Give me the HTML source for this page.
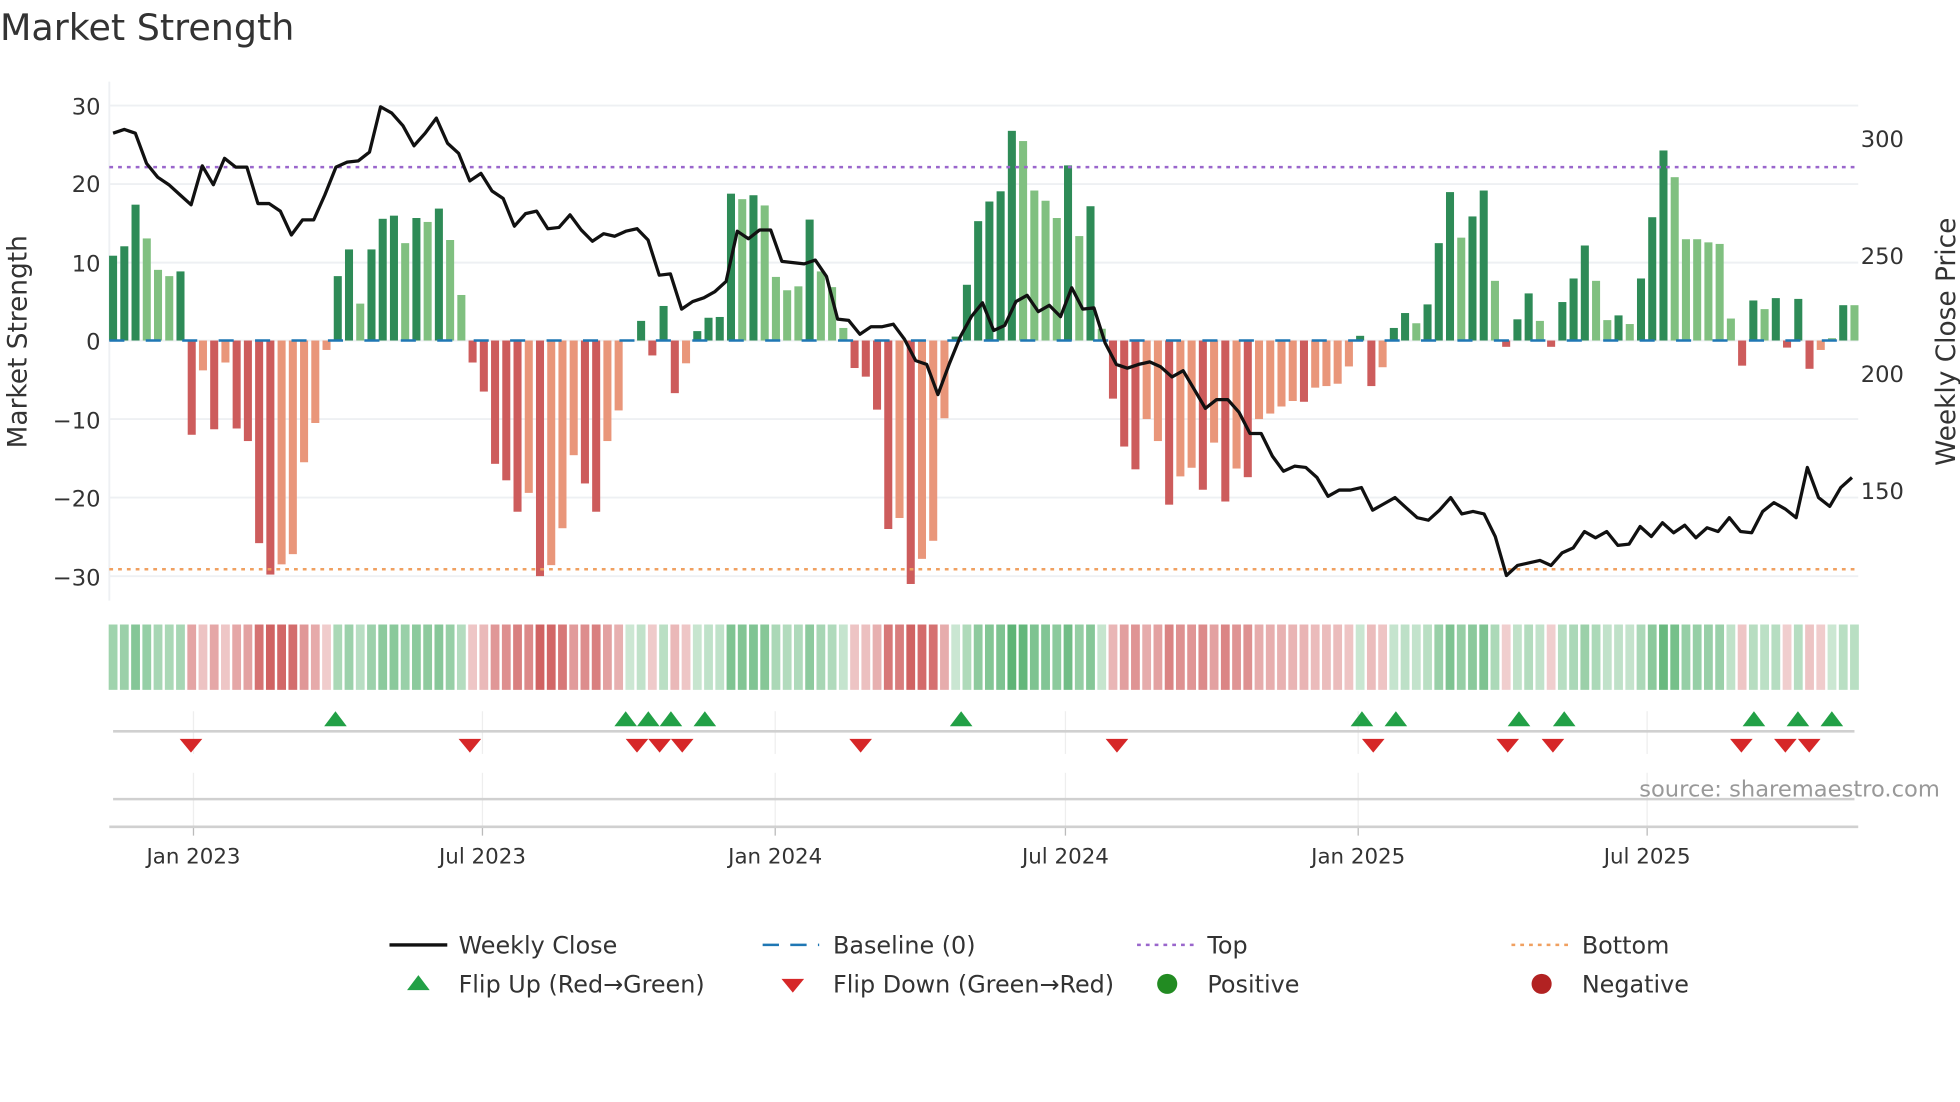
<!DOCTYPE html>
<html><head><meta charset="utf-8"><style>
html,body{margin:0;padding:0;background:#fff;}
svg{display:block;font-family:"DejaVu Sans","Liberation Sans",sans-serif;}
</style></head><body>
<svg id="s" width="1960" height="1102" viewBox="0 0 1560 877" preserveAspectRatio="none" xmlns="http://www.w3.org/2000/svg">
<rect width="1560" height="877" fill="#fff"/>
<text x="0" y="32" font-size="29" fill="#333">Market Strength</text>
<g id="grid"></g>
<g id="bars"></g>
<line x1="87" y1="133" x2="1479" y2="133" stroke="#9a66cc" stroke-width="2" stroke-dasharray="3,4"/>
<line x1="87" y1="453" x2="1479" y2="453" stroke="#f0a060" stroke-width="2" stroke-dasharray="3,4"/>
<line x1="87" y1="271" x2="1479" y2="271" stroke="#1f77b4" stroke-width="2" stroke-dasharray="12,17"/>
<polyline id="price" fill="none" stroke="#111" stroke-width="2.6" stroke-linejoin="round"/>
<g id="heat"></g>
<g id="marks"></g>
<g font-size="18" fill="#333" text-anchor="end">
<text x="80" y="91">30</text><text x="80" y="153">20</text><text x="80" y="216">10</text><text x="80" y="278">0</text>
<text x="80" y="341">−10</text><text x="80" y="403">−20</text><text x="80" y="466">−30</text>
</g>
<g font-size="18" fill="#333">
<text x="1481" y="117">300</text><text x="1481" y="210">250</text><text x="1481" y="304">200</text><text x="1481" y="397">150</text>
</g>
<text transform="translate(21,272) rotate(-90)" font-size="21" fill="#333" text-anchor="middle">Market Strength</text>
<text transform="translate(1556,272) rotate(-90)" font-size="21" fill="#333" text-anchor="middle">Weekly Close Price</text>
<text x="1544" y="634" font-size="18" fill="#999" text-anchor="end">source: sharemaestro.com</text>
<g font-size="17" fill="#333" text-anchor="middle">
<text x="154" y="687">Jan 2023</text><text x="384" y="687">Jul 2023</text><text x="617" y="687">Jan 2024</text>
<text x="848" y="687">Jul 2024</text><text x="1081" y="687">Jan 2025</text><text x="1311" y="687">Jul 2025</text>
</g>
<g font-size="19" fill="#333">
<line x1="310" y1="752" x2="356" y2="752" stroke="#111" stroke-width="2.6"/><text x="365" y="759">Weekly Close</text>
<line x1="607" y1="752" x2="652" y2="752" stroke="#1f77b4" stroke-width="2" stroke-dasharray="13,9"/><text x="663" y="759">Baseline (0)</text>
<line x1="905" y1="752" x2="950" y2="752" stroke="#9a66cc" stroke-width="2" stroke-dasharray="3,4"/><text x="961" y="759">Top</text>
<line x1="1203" y1="752" x2="1248" y2="752" stroke="#f0a060" stroke-width="2" stroke-dasharray="3,4"/><text x="1259" y="759">Bottom</text>
<polygon points="324,788 342,788 333,776" fill="#22a046"/><text x="365" y="790">Flip Up (Red→Green)</text>
<polygon points="622,779 640,779 631,790" fill="#d62728"/><text x="663" y="790">Flip Down (Green→Red)</text>
<circle cx="929" cy="783" r="8" fill="#228b22"/><text x="961" y="790">Positive</text>
<circle cx="1227" cy="783" r="8" fill="#b22222"/><text x="1259" y="790">Negative</text>
</g>
</svg>
<script>
var NS="http://www.w3.org/2000/svg";
function el(t,a,p){var e=document.createElementNS(NS,t);for(var k in a)e.setAttribute(k,a[k]);document.getElementById(p).appendChild(e);return e;}
[84,146.5,209,271,333.5,396,458.5].forEach(function(y){el('line',{x1:87,y1:y,x2:1479,y2:y,stroke:'#eef0f3','stroke-width':1.5},'grid');});
el('line',{x1:87,y1:65,x2:87,y2:478,stroke:'#eef0f3','stroke-width':1.5},'grid');
[154,384,617,848,1081,1311].forEach(function(x){el('line',{x1:x,y1:566,x2:x,y2:600,stroke:'#eee','stroke-width':1},'grid');el('line',{x1:x,y1:615,x2:x,y2:665,stroke:'#eee','stroke-width':1},'grid');el('line',{x1:x,y1:658,x2:x,y2:665,stroke:'#bbb','stroke-width':1},'grid');});
el('line',{x1:90,y1:582,x2:1476,y2:582,stroke:'#d0d0d0','stroke-width':2},'grid');
el('line',{x1:90,y1:636,x2:1476,y2:636,stroke:'#d0d0d0','stroke-width':2},'grid');
el('line',{x1:87,y1:658,x2:1479,y2:658,stroke:'#d0d0d0','stroke-width':2},'grid');
var B=[[10.8,1],[12,1],[17.3,1],[13,0],[9,0],[8.2,0],[8.8,1],[-12,1],[-3.8,0],[-11.3,1],[-2.8,0],[-11.2,1],[-12.8,1],[-25.8,1],[-29.8,1],[-28.5,0],[-27.2,0],[-15.5,0],[-10.5,0],[-1.2,0],
[8.2,1],[11.6,1],[4.7,0],[11.6,1],[15.5,1],[15.9,1],[12.4,0],[15.6,1],[15.1,0],[16.8,1],[12.8,0],[5.8,0],[-2.8,1],[-6.5,1],[-15.7,1],[-17.8,1],[-21.8,1],[-19.4,0],[-30,1],[-28.6,0],
[-23.9,0],[-14.6,0],[-18.2,1],[-21.8,1],[-12.8,0],[-8.9,0],[0,0],[2.5,1],[-1.9,1],[4.4,1],[-6.7,1],[-2.9,0],[1.2,1],[2.9,1],[3.0,1],[18.7,1],[18,0],[18.5,1],[17.2,0],[8.1,0],
[6.4,0],[6.9,0],[15.4,1],[8.8,0],[6.8,0],[1.6,0],[-3.5,1],[-4.6,1],[-8.8,1],[-24,1],[-22.6,0],[-31,1],[-27.8,0],[-25.5,0],[-9.9,0],[0.5,1],[7.1,1],[15.2,1],[17.7,1],[19,1],
[26.7,1],[25.4,0],[19.1,0],[17.8,0],[15.6,0],[22.3,1],[13.3,0],[17.1,1],[1.5,0],[-7.4,1],[-13.5,1],[-16.4,1],[-10,0],[-12.8,0],[-20.9,1],[-17.3,0],[-16.2,0],[-19,1],[-13,0],[-20.5,1],
[-16.3,0],[-17.4,1],[-10,0],[-9.3,0],[-8.4,0],[-7.7,0],[-7.8,1],[-6,0],[-5.8,0],[-5.5,0],[-3.3,0],[0.6,1],[-5.8,1],[-3.4,0],[1.6,1],[3.5,1],[2.2,0],[4.6,1],[12.4,1],[18.9,1],
[13.1,0],[15.8,1],[19.1,1],[7.6,0],[-0.8,1],[2.7,1],[6,1],[2.5,0],[-0.8,1],[4.9,1],[7.9,1],[12.1,1],[7.6,0],[2.6,0],[3.2,1],[2.1,0],[7.9,1],[15.7,1],[24.2,1],[20.8,0],
[12.9,0],[12.9,0],[12.5,0],[12.3,0],[2.8,0],[-3.2,1],[5.1,1],[4,0],[5.4,1],[-0.9,1],[5.3,1],[-3.6,1],[-1.2,0],[0.3,0],[4.5,1],[4.5,0]];
var n=B.length, dx=(1476-90)/(n-1);
B.forEach(function(b,i){
 var x=90+i*dx, v=b[0], y=271-v*6.25, h=Math.abs(v)*6.25;
 var c=v>=0?(b[1]?'#2e8b57':'#80c080'):(b[1]?'#cd5c5c':'#e9967a');
 el('rect',{x:x-3.2,y:Math.min(y,271),width:6.4,height:Math.max(h,0.5),fill:c},'bars');
 var t=Math.min(Math.abs(v)/30,1), a=0.25+0.6*t;
 var hc=v>=0?'rgba(50,160,80,'+a+')':'rgba(200,70,70,'+a+')';
 el('rect',{x:x-3.5,y:497,width:7,height:52,fill:hc},'heat');
});
var P=[106,103,106,130,141,147,155,163,132,147,126,133,133,162,162,168,187,175,175,155,133,129,128,121,85,90,100,116,106,94,114,122,144,138,152,158,180,170,168,182,181,171,183,192,186,188,184,182,191,219,218,246,240,237,232,224,184,190,183,183,208,209,210,207,220,254,255,266,260,260,258,270,287,290,314,290,268,252,241,263,259,240,235,248,243,252,229,246,245,273,290,293,290,288,292,300,295,310,325,318,318,328,345,345,363,375,371,372,380,395,390,390,388,406,401,396,404,412,414,406,396,409,407,409,427,458,450,448,446,450,440,436,423,428,423,434,433,419,427,416,424,418,428,420,423,412,423,424,407,400,405,412,372,396,403,388,380];
var m=P.length, pdx=(1474-90)/(m-1), pts=[];
P.forEach(function(y,i){pts.push((90+i*pdx).toFixed(1)+','+y);});
document.getElementById('price').setAttribute('points',pts.join(' '));
[267,498,516,534,561,765,1084,1111,1209,1245,1396,1431,1458].forEach(function(x){el('polygon',{points:(x-9)+',578 '+(x+9)+',578 '+x+',566',fill:'#22a046'},'marks');});
[152,374,507,525,543,685,889,1093,1200,1236,1386,1421,1440].forEach(function(x){el('polygon',{points:(x-9)+',588 '+(x+9)+',588 '+x+',599',fill:'#d62728'},'marks');});
</script>
</body></html>
